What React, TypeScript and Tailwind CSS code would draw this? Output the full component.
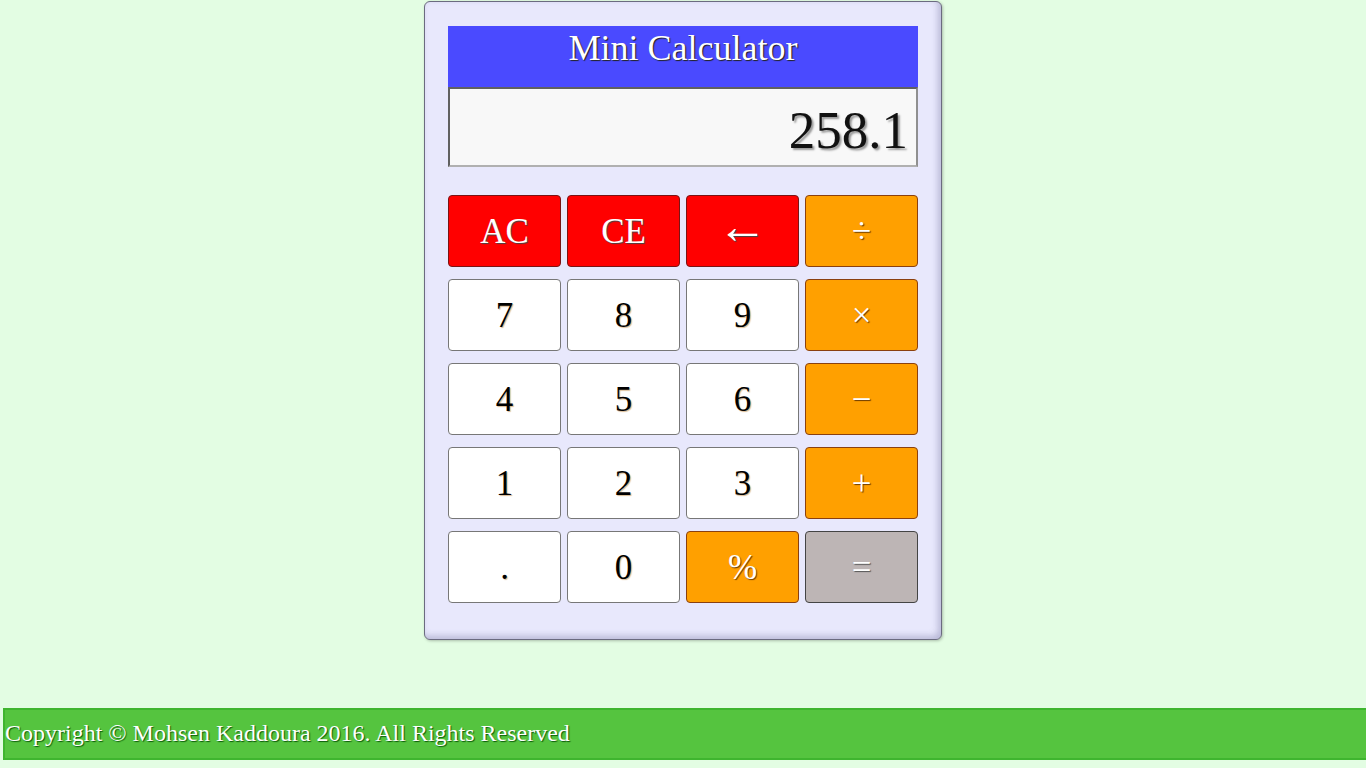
const KEYS: { label: string; kind: "red" | "num" | "op" | "eq"; big?: boolean }[] = [
  { label: "AC", kind: "red" },
  { label: "CE", kind: "red" },
  { label: "←", kind: "red", big: true },
  { label: "÷", kind: "op" },
  { label: "7", kind: "num" },
  { label: "8", kind: "num" },
  { label: "9", kind: "num" },
  { label: "×", kind: "op" },
  { label: "4", kind: "num" },
  { label: "5", kind: "num" },
  { label: "6", kind: "num" },
  { label: "−", kind: "op" },
  { label: "1", kind: "num" },
  { label: "2", kind: "num" },
  { label: "3", kind: "num" },
  { label: "+", kind: "op" },
  { label: ".", kind: "num" },
  { label: "0", kind: "num" },
  { label: "%", kind: "op" },
  { label: "=", kind: "eq" },
];

const KIND_STYLES: Record<string, string> = {
  red: "bg-[#ff0000] border-[#7a1414] text-white [text-shadow:1px_1px_1px_#444]",
  num: "bg-white border-[#777] text-black [text-shadow:1px_1px_1px_#d8b890]",
  op: "bg-[#ffa000] border-[#8a4010] text-white [text-shadow:1px_1px_1px_#6b3a00]",
  eq: "bg-[#bdb5b5] border-[#444] text-white [text-shadow:1px_1px_1px_#555]",
};

export default function App() {
  return (
    <div className="min-h-[768px] bg-[#e3fde3] font-['Liberation_Serif',serif] pt-px">
      <div className="ml-[424px] w-[518px] h-[639px] rounded-[6px] border border-[#6b6b80] bg-[#e8e8fc] px-[23px] pt-[24px] shadow-[inset_-3px_-3px_6px_rgba(100,100,150,0.35),1px_1px_3px_rgba(0,0,0,0.25)]">
        <div className="h-[61px] bg-[#4a4aff] text-center text-[36px] leading-[44px] text-white [text-shadow:1px_1px_1px_#222]">
          Mini Calculator
        </div>
        <div className="h-[80px] border-2 border-t-[#606060] border-l-[#606060] border-b-[#b0b0b0] border-r-[#909090] bg-[#f8f8f8] pr-[8px] text-right text-[53px] leading-[82px] text-[#111] [text-shadow:2px_2px_2px_#999]">
          258.1
        </div>
        <div className="mt-[28px] grid grid-cols-[113px_113px_113px_113px] gap-x-[6px] gap-y-[12px]">
          {KEYS.map((k) => (
            <button
              key={k.label}
              className={`h-[72px] rounded-[4px] border leading-none ${k.big ? "pb-[10px] text-[50px]" : "text-[35px]"} ${KIND_STYLES[k.kind]}`}
            >
              {k.label}
            </button>
          ))}
        </div>
      </div>
      <div className="mt-[68px] ml-[3px] h-[52px] border-2 border-r-0 border-[#3fb52f] bg-[#55c43f] text-[24px] leading-[46px] text-white [text-shadow:1px_1px_1px_#0a5a0a]">
        Copyright © Mohsen Kaddoura 2016. All Rights Reserved
      </div>
    </div>
  );
}
